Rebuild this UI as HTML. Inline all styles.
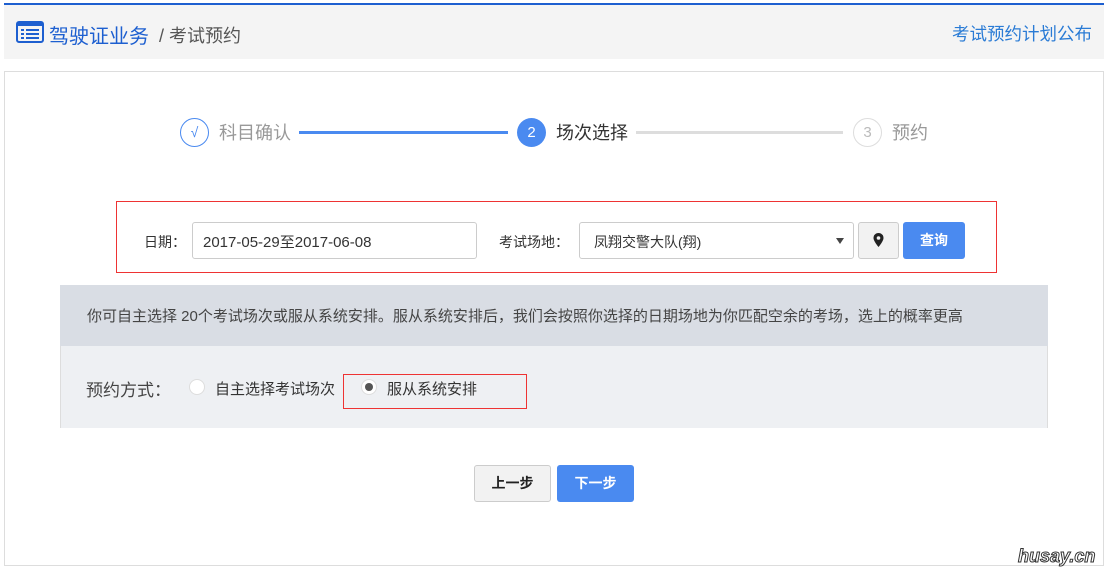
<!DOCTYPE html>
<html><head><meta charset="utf-8"><style>
*{margin:0;padding:0;box-sizing:border-box}
body{width:1111px;height:575px;background:#fff;position:relative;overflow:hidden;font-family:"Liberation Sans","Noto Sans CJK SC",sans-serif;color:#333}
.a{position:absolute}
.btn{position:absolute;border-radius:3px;font-size:14px;font-weight:bold;text-align:center}
</style></head><body>
<div class="a" style="left:4px;top:3px;width:1100px;height:2px;background:#1d5fd0"></div>
<div class="a" style="left:4px;top:5px;width:1100px;height:54px;background:#f4f4f4"></div>
<svg class="a" style="left:16px;top:21px" width="28" height="22" viewBox="0 0 28 22"><rect x="1" y="1" width="26" height="20" rx="2" fill="none" stroke="#1d5fd0" stroke-width="2"/><rect x="1" y="1" width="26" height="4" fill="#1d5fd0"/><g fill="#1d5fd0"><rect x="5" y="8" width="3" height="2"/><rect x="10" y="8" width="13" height="2"/><rect x="5" y="12" width="3" height="2"/><rect x="10" y="12" width="13" height="2"/><rect x="5" y="16" width="3" height="2"/><rect x="10" y="16" width="13" height="2"/></g></svg>
<div class="a" style="left:49px;top:20px;font-size:20px;color:#1d5fd0">驾驶证业务</div>
<div class="a" style="left:159px;top:22px;font-size:18px;color:#555">/ 考试预约</div>
<div class="a" style="left:952px;top:21px;font-size:17.5px;color:#2a7bd5">考试预约计划公布</div>
<div class="a" style="left:4px;top:71px;width:1100px;height:495px;border:1px solid #ddd"></div>
<div class="a" style="left:180px;top:118px;width:29px;height:29px;border:1px solid #4a8af0;border-radius:50%;color:#4a8af0;font-size:14px;text-align:center;line-height:27px">√</div>
<div class="a" style="left:219px;top:119px;font-size:18px;color:#999">科目确认</div>
<div class="a" style="left:299px;top:131px;width:209px;height:3px;background:#4a8af0"></div>
<div class="a" style="left:517px;top:118px;width:29px;height:29px;background:#4a8af0;border-radius:50%;color:#fff;font-size:15px;text-align:center;line-height:29px">2</div>
<div class="a" style="left:556px;top:119px;font-size:18px;color:#333">场次选择</div>
<div class="a" style="left:636px;top:131px;width:207px;height:3px;background:#ddd"></div>
<div class="a" style="left:853px;top:118px;width:29px;height:29px;border:1px solid #ddd;border-radius:50%;color:#bbb;font-size:15px;text-align:center;line-height:27px">3</div>
<div class="a" style="left:892px;top:119px;font-size:18px;color:#999">预约</div>
<div class="a" style="left:116px;top:201px;width:881px;height:72px;border:1px solid #e33"></div>
<div class="a" style="left:144px;top:232px;font-size:14px">日期：</div>
<div class="a" style="left:192px;top:222px;width:285px;height:37px;border:1px solid #ccc;border-radius:3px;font-size:15px;padding:8px 10px">2017-05-29至2017-06-08</div>
<div class="a" style="left:499px;top:232px;font-size:14px">考试场地：</div>
<div class="a" style="left:579px;top:222px;width:275px;height:37px;border:1px solid #ccc;border-radius:3px;font-size:14px;padding:9px 14px">凤翔交警大队(翔)</div>
<div class="a" style="left:836px;top:238px;border-left:4px solid transparent;border-right:4px solid transparent;border-top:6px solid #444"></div>
<div class="a" style="left:858px;top:222px;width:41px;height:37px;border:1px solid #ccc;border-radius:3px;background:#f2f2f2"></div>
<svg class="a" style="left:873px;top:233px" width="11" height="14" viewBox="0 0 11 14"><path d="M5.5 0C2.5 0 0.5 2.2 0.5 5c0 3.3 5 9 5 9s5-5.7 5-9C10.5 2.2 8.5 0 5.5 0z" fill="#222"/><circle cx="5.5" cy="5" r="1.8" fill="#f2f2f2"/></svg>
<div class="btn" style="left:903px;top:222px;width:62px;height:37px;background:#4a8af0;color:#fff;line-height:37px">查询</div>
<div class="a" style="left:60px;top:285px;width:988px;height:61px;background:#d9dde4;font-size:15px;padding:20px 27px;color:#444;white-space:nowrap">你可自主选择 20个考试场次或服从系统安排。服从系统安排后，我们会按照你选择的日期场地为你匹配空余的考场，选上的概率更高</div>
<div class="a" style="left:60px;top:346px;width:988px;height:82px;background:#eef0f3;border-left:1px solid #ddd;border-right:1px solid #ddd"></div>
<div class="a" style="left:86px;top:376px;font-size:17px;color:#444">预约方式：</div>
<div class="a" style="left:189px;top:379px;width:16px;height:16px;border-radius:50%;background:#fff;border:1px solid #ddd"></div>
<div class="a" style="left:215px;top:378px;font-size:15px;color:#333">自主选择考试场次</div>
<div class="a" style="left:343px;top:374px;width:184px;height:35px;border:1px solid #e33"></div>
<div class="a" style="left:361px;top:379px;width:16px;height:16px;border-radius:50%;background:#fff;border:1px solid #ddd"></div>
<div class="a" style="left:365px;top:383px;width:8px;height:8px;border-radius:50%;background:#555"></div>
<div class="a" style="left:387px;top:378px;font-size:15px;color:#333">服从系统安排</div>
<div class="btn" style="left:474px;top:465px;width:77px;height:37px;background:#f2f2f2;border:1px solid #ccc;line-height:35px;color:#222">上一步</div>
<div class="btn" style="left:557px;top:465px;width:77px;height:37px;background:#4a8af0;line-height:37px;color:#fff">下一步</div>
<div class="a" style="left:1018px;top:546px;font-size:18px;font-weight:bold;font-style:italic;color:#fff;-webkit-text-stroke:1px #333">husay.cn</div>
</body></html>
